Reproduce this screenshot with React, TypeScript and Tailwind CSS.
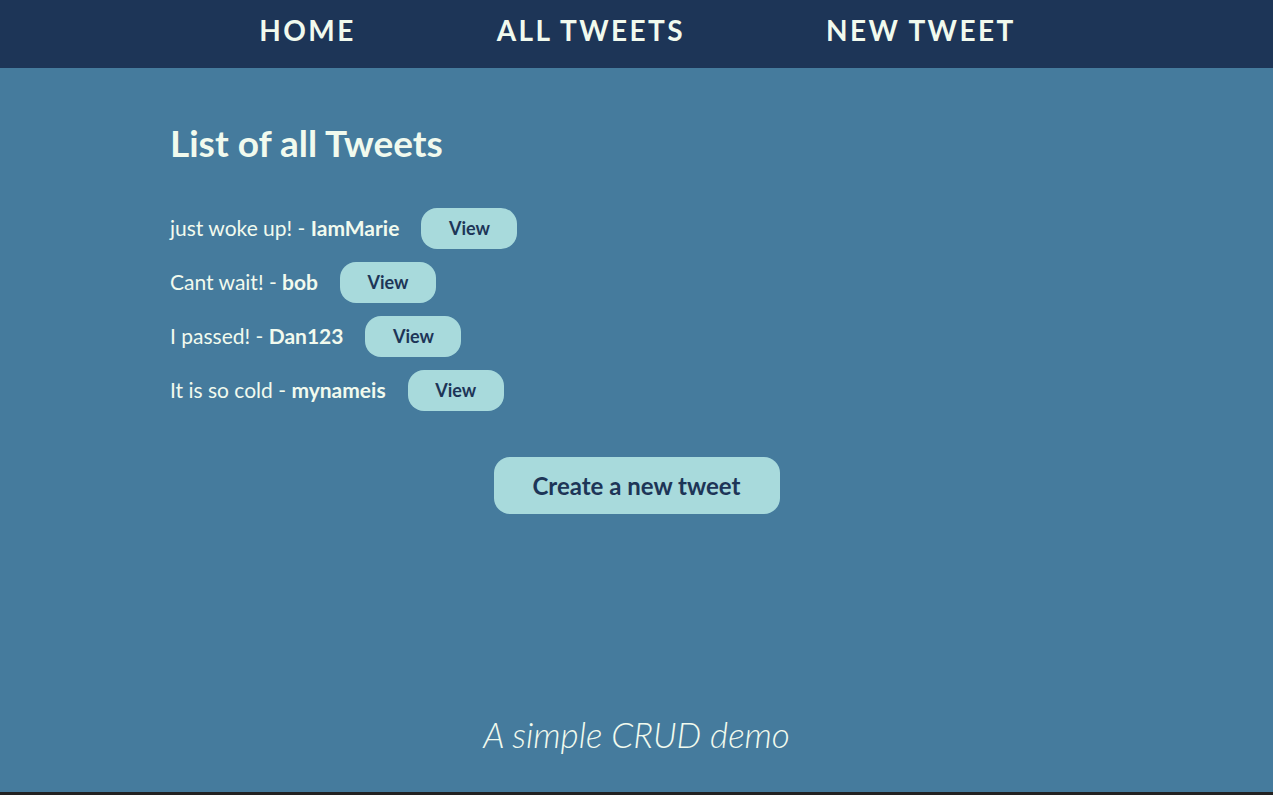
import React from "react";

const tweets = [
  { text: "just woke up!", user: "IamMarie" },
  { text: "Cant wait!", user: "bob" },
  { text: "I passed!", user: "Dan123" },
  { text: "It is so cold", user: "mynameis" },
];

export default function App() {
  return (
    <div
      className="h-[795px] flex flex-col bg-[#457b9d] text-[#f1faee] border-b-[3px] border-[#222222]"
      style={{ fontFamily: "Lato, 'Noto Sans', sans-serif" }}
    >
      {/* top nav */}
      <nav className="h-[68px] shrink-0 bg-[#1d3557] flex items-center justify-center gap-[141px] pb-[8px] pl-[2px]">
        <a className="text-[28px] font-bold tracking-[2.4px] leading-none">HOME</a>
        <a className="text-[28px] font-bold tracking-[2.4px] leading-none">ALL TWEETS</a>
        <a className="text-[28px] font-bold tracking-[2.4px] leading-none">NEW TWEET</a>
      </nav>

      <main className="flex flex-col">
        <div className="pl-[170px] pt-[53px]">
          <h1 className="text-[37px] font-bold leading-[43px]">List of all Tweets</h1>

          <ul className="mt-[44px] flex flex-col gap-[13px]">
            {tweets.map((t) => (
              <li key={t.user} className="flex items-center gap-[22px]">
                <span className="text-[21px] -mt-[2px]">
                  {t.text} - <strong className="font-bold">{t.user}</strong>
                </span>
                <button className="w-[96px] h-[41px] rounded-[16px] bg-[#a8dadc] text-[#1d3557] text-[18px] font-bold">
                  View
                </button>
              </li>
            ))}
          </ul>
        </div>

        <div className="flex justify-center mt-[46px]">
          <button className="w-[286px] h-[57px] rounded-[16px] bg-[#a8dadc] text-[#1d3557] text-[24px] font-bold">
            Create a new tweet
          </button>
        </div>
      </main>

      <footer className="mt-auto pb-[36px] flex justify-center">
        <p className="text-[35px] italic font-light leading-[43px]">A simple CRUD demo</p>
      </footer>
    </div>
  );
}
